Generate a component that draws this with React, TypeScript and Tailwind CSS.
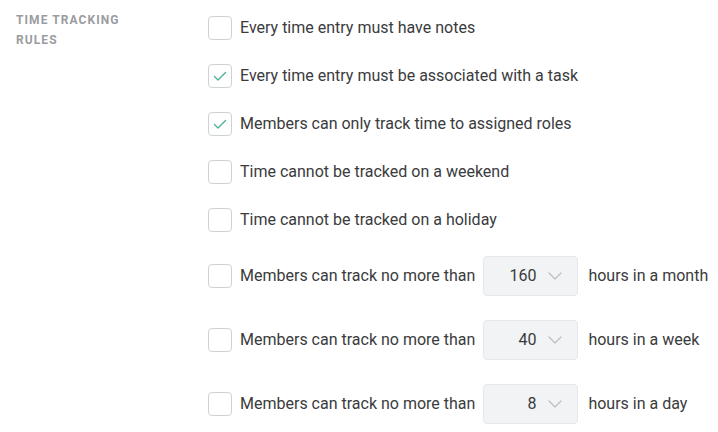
import { ChevronDown } from "lucide-react";

type Rule = {
  label: string;
  checked?: boolean;
  limit?: { value: string; unit: string };
};

const rules: Rule[] = [
  { label: "Every time entry must have notes" },
  { label: "Every time entry must be associated with a task", checked: true },
  { label: "Members can only track time to assigned roles", checked: true },
  { label: "Time cannot be tracked on a weekend" },
  { label: "Time cannot be tracked on a holiday" },
  { label: "Members can track no more than", limit: { value: "160", unit: "hours in a month" } },
  { label: "Members can track no more than", limit: { value: "40", unit: "hours in a week" } },
  { label: "Members can track no more than", limit: { value: "8", unit: "hours in a day" } },
];

function Checkbox({ checked }: { checked?: boolean }) {
  return (
    <span className="flex size-6 shrink-0 items-center justify-center rounded border border-[#cfd1d4] bg-white">
      {checked && (
        <svg viewBox="0 0 14 14" className="size-[14px]" fill="none" aria-hidden>
          <path
            d="M1.5 7.5L5 11l7.5-7.5"
            stroke="#4fb09d"
            strokeWidth="1.4"
            strokeLinecap="round"
            strokeLinejoin="round"
          />
        </svg>
      )}
    </span>
  );
}

export default function App() {
  return (
    <div className="flex min-h-[432px] w-[718px] bg-white pt-4 pl-4 font-['Roboto',sans-serif]">
      <h2 className="-mt-1.5 w-[192px] shrink-0 pr-20 text-[12px] leading-[20px] font-bold tracking-[0.09em] text-[#9a9c9f] uppercase">
        Time tracking rules
      </h2>
      <div className="flex flex-col gap-6">
        {rules.map((rule, i) => (
          <label key={i} className="flex items-center text-[16px] text-[#3a3b3d]">
            <Checkbox checked={rule.checked} />
            <span className="ml-2">{rule.label}</span>
            {rule.limit && (
              <>
                <span className="ml-2 flex h-10 w-[95px] items-center justify-end gap-[7px] rounded border border-[#e6e7e9] bg-[#f2f3f5] pr-[10px]">
                  {rule.limit.value}
                  <ChevronDown className="size-6 text-[#bcbec1]" strokeWidth={1.25} aria-hidden />
                </span>
                <span className="ml-2.5">{rule.limit.unit}</span>
              </>
            )}
          </label>
        ))}
      </div>
    </div>
  );
}
